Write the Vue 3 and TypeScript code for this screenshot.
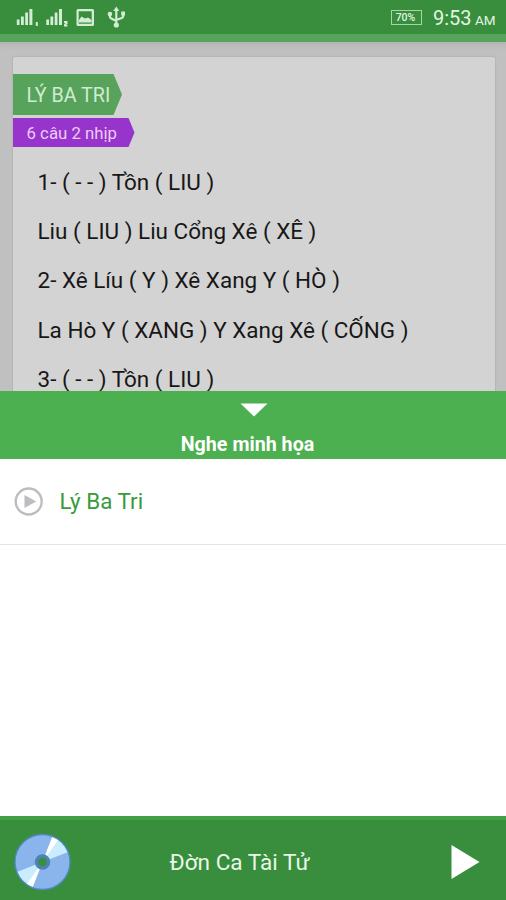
<script setup lang="ts">
import { ref } from 'vue'

const lines: string[] = [
  '1- ( - - ) Tồn ( LIU )',
  'Liu ( LIU ) Liu Cổng Xê ( XÊ )',
  '2- Xê Líu ( Y ) Xê Xang Y ( HÒ )',
  'La Hò Y ( XANG ) Y Xang Xê ( CỐNG )',
  '3- ( - - ) Tồn ( LIU )',
]
const tracks = ref<string[]>(['Lý Ba Tri'])
</script>

<template>
  <main class="screen">
    <header class="status">
      <svg class="status-icons" width="130" height="34" viewBox="0 0 130 34" aria-hidden="true">
        <g fill="#d3edd4">
          <path d="M16.800 19.500h2.700v5.500h-2.700zM21 16.500h2.800V25H21zM25.200 12.500H28V25h-2.800zM29.400 9h3v16h-3zM35.800 22h2v4h-2z" />
          <path d="M46.300 19.500H49v5.500h-2.700zM50.400 16.500h2.800V25h-2.800zM54.700 12.500h2.800V25h-2.800zM59 9h3v16h-3z" />
          <path d="M64 21h3.500v3l-1.500 1h1.500v1.500H64V24.500l1.500-1.500H64z" />
          <path fill-rule="evenodd" d="M78 9h14.500a1.500 1.500 0 0 1 1.500 1.500v14a1.500 1.500 0 0 1-1.500 1.500H78a1.500 1.500 0 0 1-1.500-1.500v-14A1.500 1.500 0 0 1 78 9zm.7 2.200v12.500h13V11.200z" />
          <path d="M79 22.500v-2.500l2.500-3.500 3.500 2 3-1 3.500 2.500v2.500z" />
          <path d="M116.300 6.500l3 4.500h-6z" />
          <circle cx="116.300" cy="25" r="2.600" />
          <circle cx="109.900" cy="14" r="2.300" />
          <path d="M121.200 11.500h3.800V15.500h-3.800z" />
        </g>
        <path d="M116.300 10v15M109.900 13.500v3q0 1.500 1.500 2l4.900 2.500M123.200 14v2q0 1.500-1.500 2l-5.400 2" fill="none" stroke="#d3edd4" stroke-width="2.200" />
      </svg>
      <div class="status-right">
        <span class="battery">70%</span>
        <span class="clock">9:53</span>
        <span class="meridiem">AM</span>
      </div>
    </header>
    <div class="toolbar-edge"></div>

    <section class="page">
      <article class="card">
        <h1 class="tag tag-title"><span>LÝ BA TRI</span></h1>
        <h2 class="tag tag-rhythm"><span>6 câu 2 nhịp</span></h2>
        <div class="lyrics">
          <p v-for="(line, i) in lines" :key="i">{{ line }}</p>
        </div>
      </article>
    </section>

    <section class="sheet">
      <div class="sheet-head">
        <svg class="arrow" width="28" height="14" viewBox="0 0 28 14" aria-hidden="true">
          <path d="M0.500 0.500h27L14 13.500z" fill="#fff" />
        </svg>
        <h3>Nghe minh họa</h3>
      </div>
      <ul class="tracks">
        <li v-for="track in tracks" :key="track">
          <svg width="30" height="30" viewBox="0 0 30 30" aria-hidden="true">
            <circle cx="14.700" cy="14.500" r="13" fill="none" stroke="#bcbcc1" stroke-width="2.400" />
            <path d="M10.500 8v13l11.700-6.500z" fill="#bcbcc1" />
          </svg>
          <span class="track-name">{{ track }}</span>
        </li>
      </ul>
    </section>

    <footer class="player">
      <svg class="disc" width="58" height="58" viewBox="0 0 58 58" aria-hidden="true">
        <circle cx="29.500" cy="29" r="27.500" fill="#8ab4ec" stroke="#5089c4" stroke-width="1.300" />
        <g transform="translate(.5 0)">
          <path d="M29 29L38.700 4.200A26.700 26.700 0 0 1 54 19.200zM29 29L19.300 53.800A26.700 26.700 0 0 1 4 38.800z" fill="#c9edff" />
          <path d="M29 29L38.700 4.200A26.700 26.700 0 0 1 44.500 7.300zM29 29L19.300 53.800A26.700 26.700 0 0 1 13.500 50.700z" fill="#fff" />
          <circle cx="29" cy="29" r="6" fill="#388e3c" stroke="#4c82b5" stroke-width="3.500" />
        </g>
      </svg>
      <span class="now">Đờn Ca Tài Tử</span>
      <svg class="play" width="30" height="36" viewBox="0 0 30 36" aria-hidden="true">
        <path d="M1.500 1v34l28-17z" fill="#fff" />
      </svg>
    </footer>
  </main>
</template>

<style>
body {
  margin: 0;
}
</style>

<style scoped>
.screen {
  width: 506px;
  height: 900px;
  display: flex;
  flex-direction: column;
  overflow: hidden;
  background: #fff;
  font-family: Roboto, "Noto Sans", sans-serif;
}
h1, h2, h3, p, ul {
  margin: 0;
  padding: 0;
  font-weight: 400;
}
.status {
  flex: none;
  height: 34px;
  display: flex;
  justify-content: space-between;
  background: #388e3c;
  color: #e2f5e3;
}
.status-right {
  display: flex;
  align-items: baseline;
  padding: 6px 10px 0 0;
  line-height: 24px;
}
.battery {
  box-sizing: border-box;
  width: 31px;
  height: 15px;
  margin-right: 11px;
  padding-right: 2px;
  align-self: flex-start;
  margin-top: 4px;
  border: 1px solid #a5d6a7;
  font-size: 10.500px;
  font-weight: 500;
  line-height: 13px;
  text-align: center;
}
.clock {
  width: 42px;
  font-size: 20px;
}
.meridiem {
  width: 21px;
  font-size: 13.500px;
}
.toolbar-edge {
  flex: none;
  height: 8px;
  background: #58a35c;
}
.page {
  flex: none;
  box-sizing: border-box;
  height: 349px;
  padding: 15px 11px 0 12.500px;
  overflow: hidden;
  background: linear-gradient(#b5b5b5, #c0c0c0 8px);
}
.card {
  box-sizing: border-box;
  height: 360px;
  padding-top: 17px;
  background: #d3d3d3;
  border-radius: 2px;
  box-shadow: 0 0 2px #9c9c9c;
}
.tag {
  box-sizing: border-box;
  padding-left: 14px;
  white-space: nowrap;
}
.tag-title {
  width: 109.500px;
  height: 41px;
  background: #58a35c;
  color: #d0ecd1;
  font-size: 19.700px;
  line-height: 44px;
  clip-path: polygon(0 0, 101px 0, 100% 50%, 101px 100%, 0 100%);
}
.tag-rhythm {
  width: 122px;
  height: 29px;
  margin-top: 3px;
  background: #9734cb;
  color: #eccdf8;
  font-size: 16.800px;
  line-height: 31px;
  clip-path: polygon(0 0, 116px 0, 100% 50%, 116px 100%, 0 100%);
}
.lyrics {
  padding: 11px 0 0 25px;
  color: #171717;
  font-size: 22.480px;
  line-height: 49.200px;
  white-space: nowrap;
}
.sheet {
  flex: 1;
  background: #fff;
}
.sheet-head {
  height: 68px;
  display: flex;
  flex-direction: column;
  align-items: center;
  background: #4caf50;
  color: #fff;
}
.arrow {
  margin: 12px 0 0 2px;
}
.sheet-head h3 {
  margin: 15px 0 0 -11px;
  font-size: 19.700px;
  font-weight: 700;
  line-height: 26px;
}
.tracks {
  list-style: none;
}
.tracks li {
  box-sizing: border-box;
  height: 86px;
  display: flex;
  align-items: center;
  gap: 15.500px;
  padding-left: 14px;
  border-bottom: 1px solid #e4e4e4;
  color: #389b3c;
  font-size: 22.400px;
}
.track-name {
  padding-bottom: 2px;
}
.player {
  flex: none;
  box-sizing: border-box;
  height: 84px;
  display: grid;
  grid-template-columns: 98px 1fr 30px;
  align-items: center;
  padding: 4px 26px 0 13px;
  background: #388e3c;
  border-top: 4px solid #43a047;
  color: #e8f7e9;
}
.now {
  padding-left: 58.500px;
  font-size: 22.600px;
}
</style>
